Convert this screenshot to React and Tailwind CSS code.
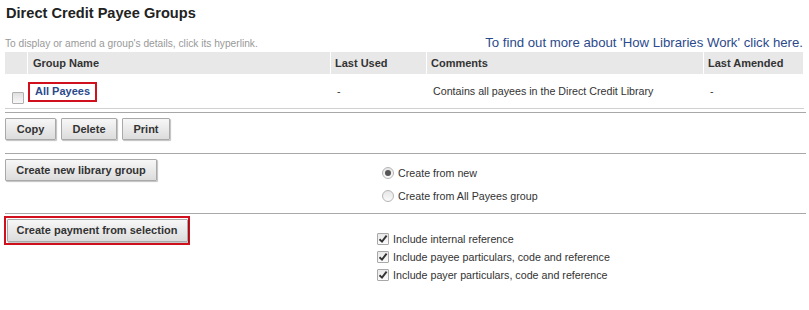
import React from "react";

function Btn({ children, className = "" }) {
  return (
    <button
      className={
        "h-[22px] px-0 whitespace-nowrap border border-[#a9a9a9] rounded-[1px] bg-gradient-to-b from-[#f7f7f7] to-[#dcdcdc] shadow-[1px_1px_1px_rgba(0,0,0,0.25)] text-[11px] font-bold text-[#333] leading-none " +
        className
      }
    >
      {children}
    </button>
  );
}

function Radio({ checked }) {
  return (
    <span className="w-[12px] h-[12px] rounded-full border border-[#b5b5b5] bg-gradient-to-b from-[#e6e6e6] to-[#fafafa] flex items-center justify-center shrink-0">
      {checked && <span className="w-[6px] h-[6px] rounded-full bg-[#555]" />}
    </span>
  );
}

function Check() {
  return (
    <span className="w-[12px] h-[12px] border border-[#a8a8a8] rounded-[1px] bg-gradient-to-b from-[#e9e9e9] to-[#fbfbfb] flex items-center justify-center shrink-0">
      <svg width="10" height="10" viewBox="0 0 10 10">
        <path d="M1.5 5.2 L4 7.6 L8.6 1.6" fill="none" stroke="#333" strokeWidth="1.9" />
      </svg>
    </span>
  );
}

export default function App() {
  return (
    <div className="w-[809px] h-[310px] bg-white font-['Liberation_Sans',Arial,sans-serif] text-[#333] overflow-hidden">
      <h1 className="pl-[6px] pt-[4px] h-[22px] text-[14.6px] leading-[18px] font-bold text-[#222]">
        Direct Credit Payee Groups
      </h1>
      <div className="flex justify-between items-end h-[30px] pl-[5px] pr-[6px] pb-[2px]">
        <span className="text-[10.2px] leading-[12px] text-[#999]">
          To display or amend a group's details, click its hyperlink.
        </span>
        <span className="text-[13.2px] leading-[15px] text-[#2b4a8c]">
          To find out more about 'How Libraries Work' click here.
        </span>
      </div>
      <div className="px-[5px]">
        <div className="grid grid-cols-[22px_302px_95px_276px_99px] gap-x-[1px] h-[22px] text-[11px] font-bold text-[#333]">
          <div className="bg-[#e8e8e8]" />
          <div className="bg-[#e8e8e8] pl-[5px] flex items-center">Group Name</div>
          <div className="bg-[#e8e8e8] pl-[4px] flex items-center">Last Used</div>
          <div className="bg-[#e8e8e8] pl-[4px] flex items-center">Comments</div>
          <div className="bg-[#e8e8e8] pl-[4px] flex items-center">Last Amended</div>
        </div>
        <div className="grid grid-cols-[22px_302px_95px_276px_99px] gap-x-[1px] h-[34px] text-[10.7px] text-[#333]">
          <div className="flex items-end pb-[4px] pl-[7px]">
            <span className="w-[12px] h-[12px] border border-[#b0b0b0] rounded-[1px] bg-gradient-to-b from-[#e0e0e0] to-[#f8f8f8]" />
          </div>
          <div className="flex items-center">
            <span className="mt-[1px] h-[20px] px-[5px] border-2 border-[#d0101c] flex items-center font-bold text-[11px] text-[#2b4a8c]">
              All Payees
            </span>
          </div>
          <div className="pl-[6px] flex items-center">-</div>
          <div className="pl-[6px] flex items-center">Contains all payees in the Direct Credit Library</div>
          <div className="pl-[6px] flex items-center">-</div>
        </div>
        <div className="h-px bg-[#d0d0d0]" />
        <div className="mt-[3px] h-px bg-[#a8a8a8] mr-[-2px]" />
        <div className="flex gap-[5px] mt-[5px]">
          <Btn className="w-[51px]">Copy</Btn>
          <Btn className="w-[56px]">Delete</Btn>
          <Btn className="w-[48px]">Print</Btn>
        </div>
        <div className="mt-[13px] h-px bg-[#a8a8a8] mr-[-2px]" />
        <div className="flex h-[59px]">
          <div className="w-[372px] pt-[5px] flex items-start">
            <Btn className="w-[152px]">Create new library group</Btn>
          </div>
          <div className="pt-[13px] flex flex-col gap-[11px] pl-[5px] text-[10.7px]">
            <div className="flex items-center gap-[4px] leading-[12px]">
              <Radio checked />
              <span>Create from new</span>
            </div>
            <div className="flex items-center gap-[4px] leading-[12px]">
              <Radio />
              <span>Create from All Payees group</span>
            </div>
          </div>
        </div>
        <div className="h-px bg-[#a8a8a8] mr-[-2px]" />
        <div className="flex mt-[2px]">
          <div className="w-[372px]">
            <div className="ml-[-1px] w-[186px] h-[29px] border-2 border-[#d0101c] flex items-center justify-center">
              <Btn className="w-[181px] h-[23px]">Create payment from selection</Btn>
            </div>
          </div>
          <div className="pt-[17px] flex flex-col gap-[6px] text-[10.7px]">
            <div className="flex items-center gap-[4px] leading-[12px]">
              <Check />
              <span>Include internal reference</span>
            </div>
            <div className="flex items-center gap-[4px] leading-[12px]">
              <Check />
              <span>Include payee particulars, code and reference</span>
            </div>
            <div className="flex items-center gap-[4px] leading-[12px]">
              <Check />
              <span>Include payer particulars, code and reference</span>
            </div>
          </div>
        </div>
      </div>
    </div>
  );
}
